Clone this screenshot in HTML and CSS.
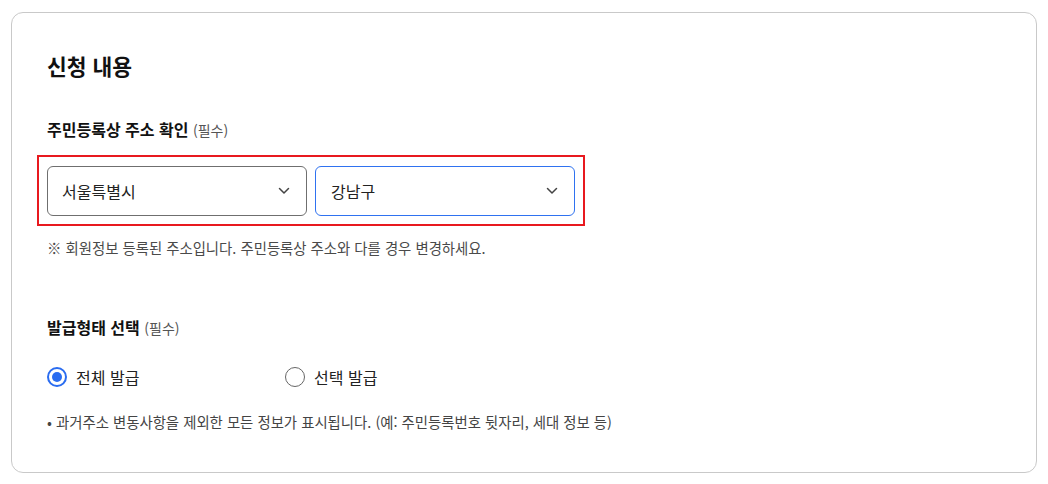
FILE: index.html
```html
<!DOCTYPE html>
<html lang="ko">
<head>
<meta charset="utf-8">
<link rel="stylesheet" href="styles.css">
</head>
<body>
<section class="card">
  <h2 class="title">신청 내용</h2>

  <div class="field-label">주민등록상 주소 확인 <span class="req">(필수)</span></div>
  <div class="highlight">
    <div class="select">
      <span>서울특별시</span>
      <svg class="chev" width="12" height="8" viewBox="0 0 12 8"><path d="M1.5 1.5 L6 6 L10.5 1.5" fill="none" stroke="#444" stroke-width="1.5" stroke-linecap="round" stroke-linejoin="round"/></svg>
    </div>
    <div class="select active">
      <span>강남구</span>
      <svg class="chev" width="12" height="8" viewBox="0 0 12 8"><path d="M1.5 1.5 L6 6 L10.5 1.5" fill="none" stroke="#444" stroke-width="1.5" stroke-linecap="round" stroke-linejoin="round"/></svg>
    </div>
  </div>
  <p class="help">※ 회원정보 등록된 주소입니다. 주민등록상 주소와 다를 경우 변경하세요.</p>

  <div class="field-label second">발급형태 선택 <span class="req">(필수)</span></div>
  <div class="radios">
    <label class="radio"><span class="dot checked"></span><span>전체 발급</span></label>
    <label class="radio"><span class="dot"></span><span>선택 발급</span></label>
  </div>
  <p class="note">• 과거주소 변동사항을 제외한 모든 정보가 표시됩니다. (예: 주민등록번호 뒷자리, 세대 정보 등)</p>
</section>
</body>
</html>
```

FILE: styles.css
```css
* { box-sizing: border-box; }
html, body { margin: 0; padding: 0; background: #fff; }
body {
  font-family: "Noto Sans CJK KR", "Noto Sans", sans-serif;
  color: #111;
}
.card {
  margin: 12px 11px 0 11px;
  width: 1026px;
  height: 461px;
  border: 1px solid #c9c9c9;
  border-radius: 12px;
  padding: 38px 35px 0 35px;
}
.title {
  margin: 0;
  font-size: 21.5px;
  line-height: 30px;
  font-weight: 700;
  color: #111;
}
.field-label {
  margin-top: 36px;
  font-size: 16px;
  line-height: 24px;
  font-weight: 700;
  color: #111;
}
.field-label.second { margin-top: 57px; }
.req {
  font-size: 14px;
  font-weight: 400;
  color: #555;
}
.highlight {
  margin-top: 13px;
  margin-left: -10px;
  width: 548px;
  border: 2px solid #e8191f;
  padding: 9px 8px 8px 8px;
  display: flex;
  gap: 8px;
}
.select {
  width: 260px;
  height: 50px;
  border: 1px solid #6f6f6f;
  border-radius: 6px;
  display: flex;
  align-items: center;
  justify-content: space-between;
  padding: 0 16px 0 14px;
  font-size: 16px;
  color: #222;
}
.select.active { border-color: #2f72f0; padding-left: 15px; }
.chev { display: block; }
.help {
  margin: 12px 0 0 0;
  font-size: 14.4px;
  line-height: 20px;
  color: #4a4a4a;
}
.radios {
  margin-top: 25px;
  display: flex;
  height: 24px;
}
.radio {
  width: 238px;
  display: flex;
  align-items: center;
  gap: 9px;
  font-size: 16px;
  color: #222;
}
.dot {
  width: 20px;
  height: 20px;
  border-radius: 50%;
  border: 1.5px solid #666;
  display: flex;
  align-items: center;
  justify-content: center;
  flex: none;
}
.dot.checked { border: 2px solid #2a6cf0; }
.dot.checked::after {
  content: "";
  width: 10px;
  height: 10px;
  border-radius: 50%;
  background: #2a6cf0;
}
.note {
  margin: 23px 0 0 0;
  font-size: 14.4px;
  line-height: 20px;
  color: #444;
}
```
